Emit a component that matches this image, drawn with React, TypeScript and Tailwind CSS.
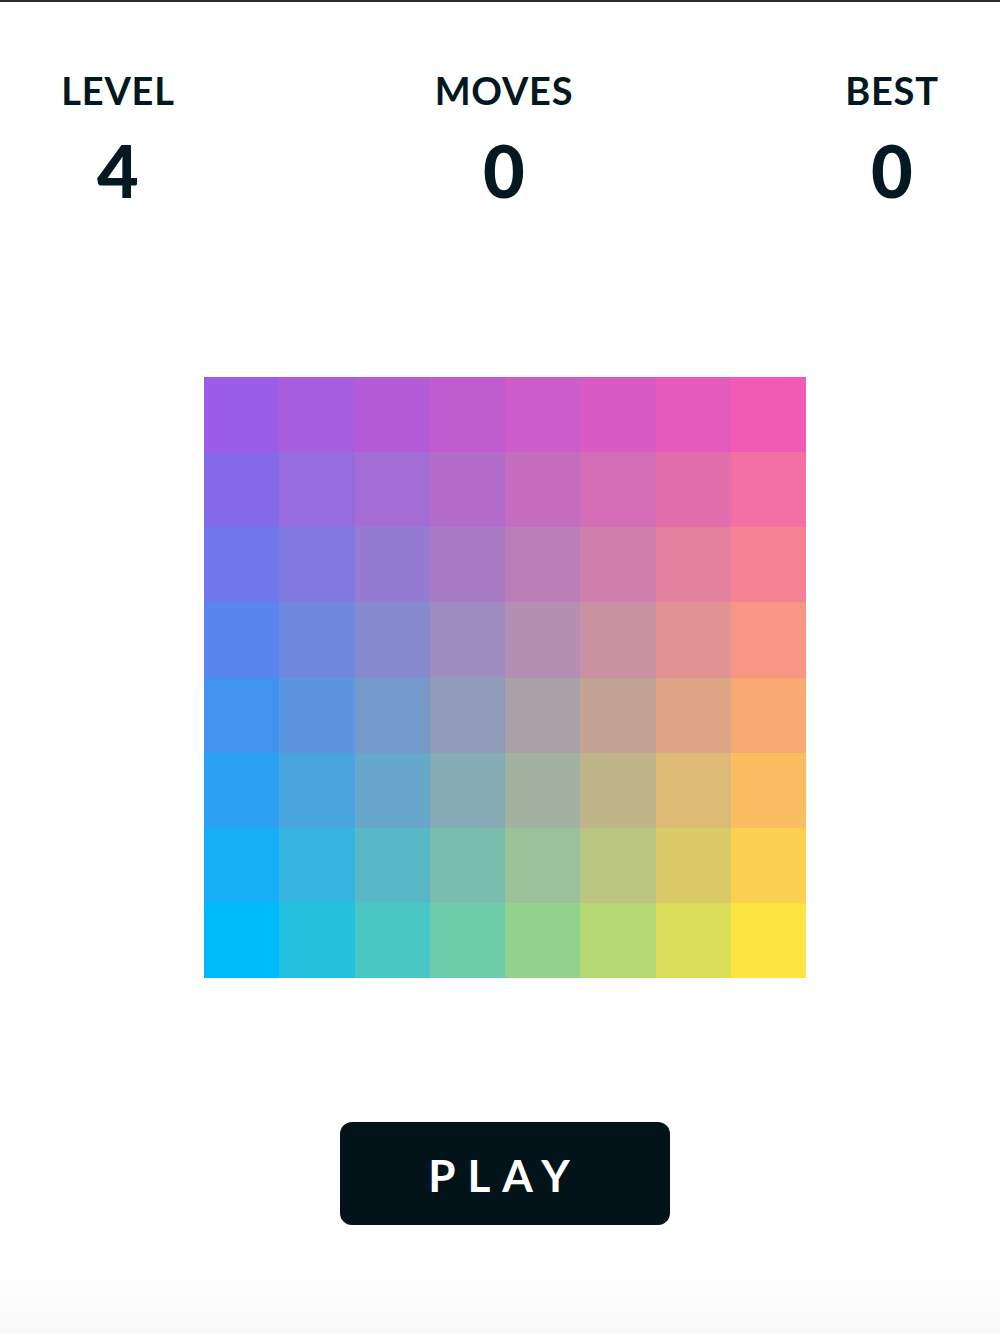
const TL = [0x9b, 0x5d, 0xe5];
const TR = [0xf1, 0x5b, 0xb5];
const BL = [0x00, 0xbb, 0xf9];
const BR = [0xfe, 0xe4, 0x40];

function mix(a: number[], b: number[], t: number) {
  return a.map((v, i) => v + (b[i] - v) * t);
}

function cellColor(row: number, col: number) {
  const x = col / 7;
  const y = row / 7;
  const top = mix(TL, TR, x);
  const bottom = mix(BL, BR, x);
  const c = mix(top, bottom, y).map((v) => Math.round(v));
  return `rgb(${c[0]}, ${c[1]}, ${c[2]})`;
}

function Stat({ label, value, className }: { label: string; value: string; className: string }) {
  return (
    <div className={`flex w-[200px] flex-col items-center ${className}`}>
      <div className="text-[38px] font-bold leading-[38px] tracking-[0.02em] text-[#031820]">{label}</div>
      <div className="mt-[25px] text-[72px] font-black leading-[72px] text-[#031820]">{value}</div>
    </div>
  );
}

export default function App() {
  const cells = [];
  for (let r = 0; r < 8; r++) {
    for (let c = 0; c < 8; c++) {
      cells.push(<div key={`${r}-${c}`} style={{ backgroundColor: cellColor(r, c) }} />);
    }
  }

  return (
    <div
      className="flex h-[1334px] w-[1000px] flex-col border-t-2 border-[#2b2b2b] bg-gradient-to-b from-white from-[95%] to-[#f9f9f9]"
      style={{ fontFamily: "Lato, 'Noto Sans', sans-serif" }}
    >
      <div className="mt-[69px] flex">
        <Stat label="LEVEL" value="4" className="ml-[18px]" />
        <Stat label="MOVES" value="0" className="ml-[186px]" />
        <Stat label="BEST" value="0" className="ml-[188px]" />
      </div>

      <div className="ml-[204px] mt-[171px] grid h-[601px] w-[602px] grid-cols-8 grid-rows-8">{cells}</div>

      <div className="ml-[340px] mt-[144px]">
        <button className="flex h-[103px] w-[330px] items-center justify-center rounded-[12px] bg-[#021419] pt-[2px] text-[44px] font-bold tracking-[0.27em] text-white">
          PLAY
        </button>
      </div>
    </div>
  );
}
